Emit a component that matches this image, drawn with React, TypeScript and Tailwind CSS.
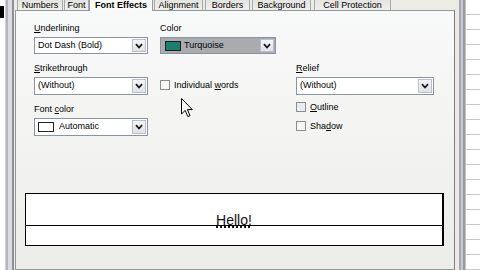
import React from "react";

const tabs = [
  { label: "Numbers", w: "w-[46px]", ml: "ml-0" },
  { label: "Font", w: "w-[25px]", ml: "ml-[1px]" },
  { label: "Font Effects", w: "w-[64px]", ml: "ml-0", active: true },
  { label: "Alignment", w: "w-[49px]", ml: "ml-[1px]" },
  { label: "Borders", w: "w-[45px]", ml: "ml-[2px]" },
  { label: "Background", w: "w-[59px]", ml: "ml-[2px]" },
  { label: "Cell Protection", w: "w-[77px]", ml: "ml-[3px]" },
];

function Chevron() {
  return (
    <svg width="8" height="6" viewBox="0 0 8 6">
      <path d="M1 1.2 L4 4.5 L7 1.2" fill="none" stroke="#1a1a1a" strokeWidth="1.8" />
    </svg>
  );
}

function Dropdown(props: { children: React.ReactNode; h: string; gray?: boolean }) {
  const { children, h, gray } = props;
  return (
    <div
      className={`flex ${h} w-full items-center border border-[#8a949e] ${
        gray ? "bg-[#a8acaf]" : "bg-white"
      }`}
    >
      <div className="flex flex-1 items-center gap-[3px] pl-[3px]">{children}</div>
      <div className="m-[1px] flex h-[calc(100%-2px)] w-[14px] items-center justify-center border border-[#b9c0cb] bg-linear-to-b from-[#f4f5f8] to-[#dfe2e8]">
        <Chevron />
      </div>
    </div>
  );
}

function Label(props: { children: React.ReactNode }) {
  return <div className="mb-[3px] h-[12px] leading-[12px]">{props.children}</div>;
}

function Check(props: { children: React.ReactNode; light?: boolean }) {
  return (
    <div className="flex items-center gap-[4px]">
      <div
        className={`h-[10px] w-[10px] border border-[#8d8d8d] ${
          props.light ? "bg-[#e9eef2]" : "bg-[#f6f6f4]"
        }`}
      />
      <span className="leading-[12px]">{props.children}</span>
    </div>
  );
}

export default function App() {
  return (
    <div className="relative flex h-[270px] w-[480px] overflow-hidden bg-white font-['Liberation_Sans',Arial,sans-serif] text-[9px] text-black">
      {/* spreadsheet on the left */}
      <div className="flex h-full w-[6px] flex-col border-r border-[#cfcfd4] bg-white">
        <div className="mt-[6px] h-[12px] w-[4px] bg-black" />
      </div>
      {/* dialog frame */}
      <div className="h-full w-[8px] border-l-2 border-r-2 border-l-[#b4b4bd] border-r-[#8f8f99] bg-[#dcdce2]" />

      {/* dialog body */}
      <div className="flex h-full w-[445px] flex-col bg-[#ecebe6] pl-[1px] pr-[4px]">
        <div className="flex h-[10px] items-end pl-[2px]">
          {tabs.map((t) =>
            t.active ? (
              <div
                key={t.label}
                className={`${t.w} ${t.ml} relative z-10 -mb-[1px] h-[11px] border-x border-[#919b9c] bg-[#fbfbfb] text-center font-bold leading-[10px]`}
              >
                {t.label}
              </div>
            ) : (
              <div
                key={t.label}
                className={`${t.w} ${t.ml} h-[10px] border-x border-[#a3aaad] bg-linear-to-b from-[#e4e4e0] to-[#f0efeb] text-center leading-[10px]`}
              >
                {t.label}
              </div>
            )
          )}
        </div>

        <div className="flex flex-1 flex-col border border-[#919b9c] border-r-[#7d7d7d] bg-linear-to-b from-[#f8f9f9] via-[#f3f3f1] to-[#ecece8] pt-[11px]">
          <div className="flex pl-[18px]">
            <div className="flex w-[114px] flex-col">
              <Label>
                <span className="underline">U</span>nderlining
              </Label>
              <Dropdown h="h-[17px]">
                <span>Dot Dash (Bold)</span>
              </Dropdown>
              <div className="mt-[8px]" />
              <Label>
                <span className="underline">S</span>trikethrough
              </Label>
              <Dropdown h="h-[18px]">
                <span>(Without)</span>
              </Dropdown>
              <div className="mt-[8px]" />
              <Label>
                Font <span className="underline">c</span>olor
              </Label>
              <Dropdown h="h-[18px]">
                <div className="h-[10px] w-[16px] border border-[#222] bg-white" />
                <span className="ml-[2px]">Automatic</span>
              </Dropdown>
            </div>

            <div className="ml-[12px] flex w-[116px] flex-col">
              <Label>Color</Label>
              <Dropdown h="h-[17px]" gray>
                <div className="ml-[1px] h-[10px] w-[16px] border border-[#1d1d1d] bg-[#1f7d6c]" />
                <span>Turquoise</span>
              </Dropdown>
              <div className="mt-[25px]">
                <Check>
                  Individual <span className="underline">w</span>ords
                </Check>
              </div>
            </div>

            <div className="ml-[20px] flex w-[138px] flex-col">
              <div className="h-[40px]" />
              <Label>
                <span className="underline">R</span>elief
              </Label>
              <Dropdown h="h-[18px]">
                <span>(Without)</span>
              </Dropdown>
              <div className="mt-[6px]">
                <Check light>
                  <span className="underline">O</span>utline
                </Check>
              </div>
              <div className="mt-[7px]">
                <Check>
                  Sha<span className="underline">d</span>ow
                </Check>
              </div>
            </div>
          </div>

          {/* preview */}
          <div className="ml-[9px] mt-[57px] flex h-[53px] w-[419px] flex-col border border-r-2 border-black bg-white">
            <div className="flex h-[31px] items-end justify-center">
              <span className="-mb-[2px] text-[14px] leading-[14px] text-[#111] underline decoration-dotted decoration-[1.5px] underline-offset-[1px]">
                Hello!
              </span>
            </div>
            <div className="flex-1 border-t border-black" />
          </div>
        </div>
      </div>

      {/* dialog frame right */}
      <div className="h-full w-[6px] border-l-2 border-r-2 border-l-[#a8a8b1] border-r-[#9898a2] bg-[#cacad2]" />

      {/* spreadsheet on the right */}
      <div className="flex h-full w-[15px] flex-col border-l border-[#c6c6c6] bg-white">
        <div className="h-[4px]" />
        {Array.from({ length: 18 }).map((_, i) => (
          <div key={i} className="h-[15px] shrink-0 border-b border-[#c9c9c9]" />
        ))}
      </div>

      {/* mouse pointer */}
      <svg className="absolute left-[181px] top-[98px]" width="12" height="20" viewBox="0 0 12 20">
        <path
          d="M0.5 0.5 L0.5 16 L4.2 12.4 L6.8 18.5 L9 17.6 L6.4 11.6 L11.3 11.6 Z"
          fill="#fff"
          stroke="#000"
          strokeWidth="1"
          strokeLinejoin="round"
        />
      </svg>
    </div>
  );
}
